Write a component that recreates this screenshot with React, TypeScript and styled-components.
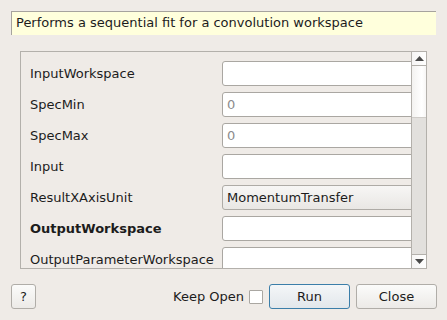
import React from "react";
import styled, { createGlobalStyle } from "styled-components";

const GlobalStyle = createGlobalStyle`
  html, body {
    margin: 0;
    padding: 0;
    background: #efebe7;
  }
  body {
    font-family: "DejaVu Sans", "Liberation Sans", sans-serif;
    font-size: 13px;
    color: #1c1c1c;
  }
`;

const Dialog = styled.div`
  width: 447px;
  height: 320px;
  box-sizing: border-box;
  padding: 11px 10px 11px 11px;
  display: flex;
  flex-direction: column;
  background: #efebe7;
`;

const Description = styled.div`
  height: 24px;
  box-sizing: border-box;
  margin-right: 1px;
  border-top: 1px solid #a6a39e;
  border-left: 1px solid #a6a39e;
  background: #ffffdc;
  padding-left: 4px;
  line-height: 22px;
  white-space: nowrap;
`;

const ScrollFrame = styled.div`
  margin: 16px 10px 0 9px;
  height: 218px;
  box-sizing: border-box;
  border: 1px solid #b3b0ab;
  display: flex;
  background: #efebe7;
`;

const Viewport = styled.div`
  flex: 1;
  overflow: hidden;
  padding: 9px 0 0 9px;
`;

const Grid = styled.div`
  display: grid;
  grid-template-columns: 192px 210px;
  row-gap: 6px;
  align-items: center;
`;

const Label = styled.div<{ $bold?: boolean }>`
  font-weight: ${(p) => (p.$bold ? "bold" : "normal")};
  white-space: nowrap;
  height: 25px;
  line-height: 25px;
`;

const Field = styled.div<{ $placeholder?: boolean }>`
  height: 25px;
  box-sizing: border-box;
  border: 1px solid #aaa7a2;
  border-radius: 3px;
  background: #ffffff;
  padding-left: 4px;
  line-height: 23px;
  color: ${(p) => (p.$placeholder ? "#8c8c8c" : "#1c1c1c")};
`;

const Combo = styled(Field)`
  background: linear-gradient(#f7f6f5, #e9e7e4);
  border-color: #aeaba6;
`;

const ScrollBar = styled.div`
  width: 14px;
  border-left: 1px solid #b3b0ab;
  display: flex;
  flex-direction: column;
  background: #e2e0dd;
`;

const ArrowButton = styled.div<{ $down?: boolean }>`
  height: 13px;
  background: linear-gradient(90deg, #f6f5f4, #ffffff);
  border-bottom: ${(p) => (p.$down ? "none" : "1px solid #b3b0ab")};
  border-top: ${(p) => (p.$down ? "1px solid #b3b0ab" : "none")};
  display: flex;
  align-items: center;
  justify-content: center;
`;

const Handle = styled.div`
  height: 51px;
  border-bottom: 1px solid #cfccc8;
  background: linear-gradient(90deg, #f3f2f0, #ffffff 70%, #f7f6f5);
`;

const Track = styled.div`
  flex: 1;
`;

const Footer = styled.div`
  margin-top: 15px;
  display: flex;
  align-items: center;
  height: 25px;
`;

const Button = styled.button<{ $width: number; $default?: boolean }>`
  width: ${(p) => p.$width}px;
  height: 25px;
  box-sizing: border-box;
  border: 1px solid ${(p) => (p.$default ? "#3b7ea9" : "#b0ada8")};
  border-radius: 3px;
  background: ${(p) =>
    p.$default
      ? "linear-gradient(#f4f6f8, #e2e7eb)"
      : "linear-gradient(#fbfbfa, #eceae7)"};
  font-family: "DejaVu Sans", "Liberation Sans", sans-serif;
  font-size: 13px;
  color: #1c1c1c;
  padding: 0;
`;

const Spacer = styled.div`
  flex: 1;
`;

const KeepOpen = styled.label`
  display: flex;
  align-items: center;
  gap: 5px;
  margin-right: 6px;
`;

const CheckBox = styled.span`
  width: 14px;
  height: 14px;
  box-sizing: border-box;
  border: 1px solid #aaa7a2;
  background: #ffffff;
  border-radius: 1px;
`;

const ButtonGap = styled.div`
  width: 6px;
`;

const Arrow = ({ down }: { down?: boolean }) => (
  <svg width="9" height="5" viewBox="0 0 9 5">
    <polygon
      points={down ? "0,0 9,0 4.5,5" : "0,5 9,5 4.5,0"}
      fill="#4a4a4a"
    />
  </svg>
);

const rows: { label: string; value?: string; placeholder?: boolean; combo?: boolean; bold?: boolean }[] = [
  { label: "InputWorkspace" },
  { label: "SpecMin", value: "0", placeholder: true },
  { label: "SpecMax", value: "0", placeholder: true },
  { label: "Input" },
  { label: "ResultXAxisUnit", value: "MomentumTransfer", combo: true },
  { label: "OutputWorkspace", bold: true },
  { label: "OutputParameterWorkspace" },
];

export default function App() {
  return (
    <>
      <GlobalStyle />
      <Dialog>
        <Description>Performs a sequential fit for a convolution workspace</Description>
        <ScrollFrame>
          <Viewport>
            <Grid>
              {rows.map((r) => (
                <React.Fragment key={r.label}>
                  <Label $bold={r.bold}>{r.label}</Label>
                  {r.combo ? (
                    <Combo>{r.value}</Combo>
                  ) : (
                    <Field $placeholder={r.placeholder}>{r.value}</Field>
                  )}
                </React.Fragment>
              ))}
            </Grid>
          </Viewport>
          <ScrollBar>
            <ArrowButton>
              <Arrow />
            </ArrowButton>
            <Handle />
            <Track />
            <ArrowButton $down>
              <Arrow down />
            </ArrowButton>
          </ScrollBar>
        </ScrollFrame>
        <Footer>
          <Button $width={25}>?</Button>
          <Spacer />
          <KeepOpen>
            Keep Open
            <CheckBox />
          </KeepOpen>
          <Button $width={81} $default>
            Run
          </Button>
          <ButtonGap />
          <Button $width={81}>Close</Button>
        </Footer>
      </Dialog>
    </>
  );
}
